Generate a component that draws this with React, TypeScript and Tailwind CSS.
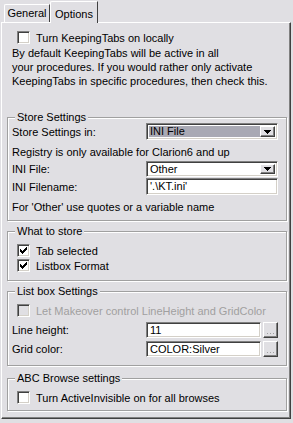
const sunken =
  "border border-t-[#808080] border-l-[#808080] border-r-white border-b-white shadow-[inset_1px_1px_0_#404040,inset_-1px_-1px_0_#d4d0c8]";
const raised =
  "border border-t-white border-l-white border-r-[#404040] border-b-[#404040] shadow-[inset_-1px_-1px_0_#808080]";

const CheckMark = () => (
  <svg width="7" height="7" viewBox="0 0 7 7" className="block">
    <path
      d="M6 0h1v1H6zM5 1h2v1H5zM0 2h1v1H0zM4 2h3v1H4zM0 3h2v1H0zM3 3h3v1H3zM0 4h5v1H0zM1 5h3v1H1zM2 6h1v1H2z"
      fill="#000"
    />
  </svg>
);

const Check = ({
  checked,
  disabled,
  label,
}: {
  checked?: boolean;
  disabled?: boolean;
  label: string;
}) => (
  <div className="flex h-[13px] items-center gap-[6px] pl-[9px]">
    <span
      className={`flex h-[13px] w-[13px] shrink-0 items-center justify-center ${sunken} ${
        disabled ? "bg-[#e0dfe3]" : "bg-white"
      }`}
    >
      {checked && <CheckMark />}
    </span>
    <span className={disabled ? "text-[#a0a0a0]" : "text-black"}>{label}</span>
  </div>
);

const Group = ({
  title,
  className,
  children,
}: {
  title: string;
  className: string;
  children: React.ReactNode;
}) => (
  <div
    className={`relative ml-[5px] w-[280px] border border-[#a0a0a0] shadow-[1px_1px_0_white,inset_1px_1px_0_white] ${className}`}
  >
    <span className="absolute -top-[7px] left-[7px] bg-[#e0dfe3] px-[2px] leading-[13px]">
      {title}
    </span>
    {children}
  </div>
);

const DropBtn = () => (
  <span
    className={`flex h-full w-[15px] shrink-0 items-center justify-center bg-[#e0dfe3] ${raised}`}
  >
    <svg width="7" height="4" viewBox="0 0 7 4" className="block">
      <path d="M0 0h7v1H0zM1 1h5v1H1zM2 2h3v1H2zM3 3h1v1H3z" fill="#000" />
    </svg>
  </span>
);

const Combo = ({ value, selected, h }: { value: string; selected?: boolean; h: string }) => (
  <div className={`flex w-[132px] bg-white p-[2px] ${sunken} ${h}`}>
    <span
      className={`flex flex-1 items-center pl-[1px] leading-none ${
        selected ? "bg-[#a9a9b4]" : ""
      }`}
    >
      {value}
    </span>
    <DropBtn />
  </div>
);

const Edit = ({ value, w, h }: { value: string; w: string; h: string }) => (
  <div className={`flex items-center bg-white pl-[3px] leading-none ${sunken} ${w} ${h}`}>
    {value}
  </div>
);

const Dots = () => (
  <span
    className={`flex h-[16px] w-[15px] items-end justify-center bg-[#e0dfe3] pb-[3px] ${raised}`}
  >
    <svg width="7" height="1" viewBox="0 0 7 1" className="block">
      <path d="M0 0h1v1H0zM3 0h1v1H3zM6 0h1v1H6z" fill="#a0a0a0" />
    </svg>
  </span>
);

export default function App() {
  return (
    <div className="h-[423px] w-[293px] bg-[#e0dfe3] font-['Liberation_Sans',Arial,sans-serif] text-[11px] text-black">
      {/* Tabs */}
      <div className="flex h-[22px] items-end pl-[4px]">
        <div className="flex h-[18px] w-[46px] items-center justify-center rounded-tl-[2px] border-l border-t border-r border-l-white border-t-white border-r-[#404040]">
          General
        </div>
        <div className="relative z-10 -mb-px flex h-[22px] w-[48px] items-start justify-center rounded-tl-[2px] border-l border-t border-r border-l-white border-t-white border-r-[#404040] bg-[#e0dfe3] pt-[4px]">
          Options
        </div>
      </div>

      {/* Panel */}
      <div className="ml-[1px] h-[397px] w-[290px] border border-t-white border-l-white border-r-[#404040] border-b-[#404040] pt-[8px] shadow-[inset_-1px_-1px_0_#808080] leading-[14px]">
        <div className="pl-[6px]">
          <Check label="Turn KeepingTabs on locally" />
        </div>
        <div className="mt-[2px] pl-[10px] leading-[14px]">
          <div>By default KeepingTabs will be active in all</div>
          <div>your procedures. If you would rather only activate</div>
          <div>KeepingTabs in specific procedures, then check this.</div>
        </div>

        <Group title="Store Settings" className="mt-[29px] h-[104px] pt-[5px] pl-[4px]">
          <div className="flex items-center">
            <span className="w-[134px]">Store Settings in:</span>
            <Combo value="INI File" selected h="h-[17px]" />
          </div>
          <div className="mt-[5px] h-[14px]">Registry is only available for Clarion6 and up</div>
          <div className="mt-[2px] flex items-center">
            <span className="w-[134px]">INI File:</span>
            <Combo value="Other" h="h-[16px]" />
          </div>
          <div className="mt-[1px] flex items-center">
            <span className="w-[134px]">INI Filename:</span>
            <Edit value={"'.\\KT.ini'"} w="w-[132px]" h="h-[17px]" />
          </div>
          <div className="mt-[5px] h-[14px]">For 'Other' use quotes or a variable name</div>
        </Group>

        <Group title="What to store" className="mt-[10px] h-[50px] pt-[12px]">
          <div className="flex flex-col gap-[2px]">
            <Check checked label="Tab selected" />
            <Check checked label="Listbox Format" />
          </div>
        </Group>

        <Group title="List box Settings" className="mt-[10px] h-[75px] pt-[12px]">
          <Check disabled label="Let Makeover control LineHeight and GridColor" />
          <div className="mt-[5px] flex items-center pl-[4px]">
            <span className="w-[134px]">Line height:</span>
            <Edit value="11" w="w-[115px]" h="h-[16px]" />
            <span className="ml-[2px]">
              <Dots />
            </span>
          </div>
          <div className="mt-[3px] flex items-center pl-[4px]">
            <span className="w-[134px]">Grid color:</span>
            <Edit value="COLOR:Silver" w="w-[115px]" h="h-[16px]" />
            <span className="ml-[2px]">
              <Dots />
            </span>
          </div>
        </Group>

        <Group title="ABC Browse settings" className="mt-[12px] h-[33px] pt-[12px]">
          <Check label="Turn ActiveInvisible on for all browses" />
        </Group>
      </div>
    </div>
  );
}
